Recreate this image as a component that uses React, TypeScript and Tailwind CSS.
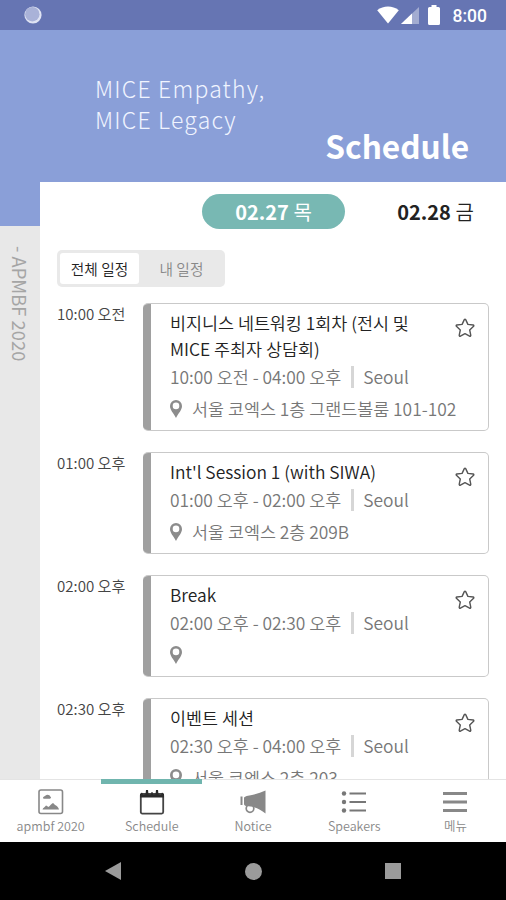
import { useState } from "react"
import clsx from "clsx"

const days = [
  { id: "27", label: "02.27", weekday: "목" },
  { id: "28", label: "02.28", weekday: "금" },
]

const filters = [
  { id: "all", label: "전체 일정" },
  { id: "mine", label: "내 일정" },
]

type Session = {
  id: number
  start: string
  end: string
  title: string
  city: string
  place: string
}

const sessions: Session[] = [
  { id: 1, start: "10:00 오전", end: "04:00 오후", title: "비지니스 네트워킹 1회차 (전시 및 MICE 주최자 상담회)", city: "Seoul", place: "서울 코엑스 1층 그랜드볼룸 101-102" },
  { id: 2, start: "01:00 오후", end: "02:00 오후", title: "Int'l Session 1 (with SIWA)", city: "Seoul", place: "서울 코엑스 2층 209B" },
  { id: 3, start: "02:00 오후", end: "02:30 오후", title: "Break", city: "Seoul", place: "" },
  { id: 4, start: "02:30 오후", end: "04:00 오후", title: "이벤트 세션", city: "Seoul", place: "서울 코엑스 2층 203" },
]

function StatusBar() {
  return (
    <div className="flex h-[30px] shrink-0 items-center bg-[#6675b3] pl-6 pr-[19px] text-white">
      <svg viewBox="0 0 18 18" className="size-[18px]">
        <circle cx="9" cy="9" r="8.6" fill="#dfe3f3" />
        <circle cx="8.3" cy="8.2" r="7.2" fill="#a9b2d8" />
      </svg>
      <svg viewBox="0 0 22 18" className="ml-auto h-[18px] w-[22px]" fill="white">
        <path d="M0.2 4.2C6.5 -0.7 15.5 -0.7 21.8 4.2L11 17.6z" />
      </svg>
      <svg viewBox="0 0 18 18" className="ml-0.5 mt-0.5 size-[18px]">
        <path d="M18 0V17H0z" fill="#a3acd1" />
        <path d="M11 6.6V17H0z" fill="white" />
      </svg>
      <svg viewBox="0 0 12 20" className="ml-[9px] h-5 w-3" fill="white">
        <path d="M3.5 0h5v2h2a1.5 1.5 0 0 1 1.5 1.5v15a1.5 1.5 0 0 1-1.5 1.5h-9A1.5 1.5 0 0 1 0 18.5v-15A1.5 1.5 0 0 1 1.5 2h2z" />
      </svg>
      <span className="ml-[13px] mt-0.5 font-[Roboto] text-[17.5px] font-medium leading-5">8:00</span>
    </div>
  )
}

function Star() {
  return (
    <svg viewBox="0 0 20 20" className="size-5" fill="none" stroke="#555" strokeWidth="1.4" strokeLinejoin="round">
      <path d="M9.3 1.6q.7-1 1.4 0l2.2 4.8 5.2.6q1.2.3.5 1.3l-3.9 3.7 1.1 5.3q0 1.2-1.2.9L10 15.7l-4.6 2.5q-1.2.3-1.2-.9l1.1-5.3-3.9-3.7q-.7-1 .5-1.3l5.2-.6z" />
    </svg>
  )
}

function Pin() {
  return (
    <svg viewBox="0 0 12 18" className="h-[18px] w-3" fill="#8c8c8c">
      <path fillRule="evenodd" d="M6 0a6 6 0 0 1 6 6c0 4-3.5 7-6 12C3.5 13 0 10 0 6a6 6 0 0 1 6-6zm0 2.6a3.3 3.3 0 1 0 0 6.6 3.3 3.3 0 0 0 0-6.6z" />
    </svg>
  )
}

function SessionRow({ session }: { session: Session }) {
  return (
    <div className="flex items-start">
      <div className="w-[86px] shrink-0 whitespace-nowrap text-[15.1px] leading-5 text-[#444]">{session.start}</div>
      <div className="flex flex-1 overflow-hidden rounded-[5px] border-y border-r border-[#c9c9c9]">
        <div className="-my-0.5 w-2 shrink-0 bg-[#a0a0a0]" />
        <div className="flex-1 pb-[3px] pl-[19px] pt-1.5">
          <div className="flex items-start justify-between pb-px">
            <div className="w-[250px] text-[17.4px] leading-[26px] text-[#222]">{session.title}</div>
            <button className="-mb-3 mr-[13px] mt-2">
              <Star />
            </button>
          </div>
          <div className="flex h-7 items-center whitespace-nowrap text-[17.4px] text-[#777]">
            <span>{session.start} - {session.end}</span>
            <span className="ml-2.5 mr-[9px] h-[22px] w-[3px] bg-[#d6d6d6]" />
            <span>{session.city}</span>
          </div>
          <div className="flex h-9 items-center gap-2.5 whitespace-nowrap text-[17.4px] text-[#777]">
            <Pin />
            <span>{session.place}</span>
          </div>
        </div>
      </div>
    </div>
  )
}

function PictureIcon() {
  return (
    <svg viewBox="0 0 26 26" className="size-[26px]" fill="#888">
      <rect x="1" y="1" width="23.5" height="23.5" rx="2" fill="none" stroke="#888" strokeWidth="1.6" />
      <path d="M5 8.8c0-1.5 2-1.3 2.6-2.3C8.8 5 12 5.7 12.2 7.6c1.3.3 1 2-.3 2.2H6.5C5.5 10 5 9.7 5 8.8z" />
      <path d="M4.5 20.5c.5-2 2.5-2.3 3.5-4 1 .2 1.500 1 2.5 1.5 1.5-1 3-3.5 4.500-4 1.5 1 1.5 2 3 2.5 1.5.7 2.5 2.5 3 4z" />
    </svg>
  )
}

function CalendarIcon() {
  return (
    <svg viewBox="0 0 26 26" className="size-[26px]">
      <rect x="1.8" y="5" width="22.4" height="19.6" rx="1.5" fill="none" stroke="#444" strokeWidth="1.8" />
      <path d="M1 8.500V5l2-1.5L4 6l2.500-.5L7 1h2l.5 4.500h2.500L12.500 3h1l.5 2.500h2.500L17 1h2l.5 4.500L22 6l1-2.500L25 5v3.500z" fill="#2b2b2b" />
    </svg>
  )
}

function MegaphoneIcon() {
  return (
    <svg viewBox="0 0 26 26" className="size-[26px]" fill="#888">
      <path d="M0.5 7.500h2v8.500h-2zM4 8.500c1-1 2-1.500 4-1.800C14 6 20 4 25.500 1.500v23C21 21 16 18.500 11 17.500l-5-.5c-1-.3-2-1-2-2z" />
      <circle cx="10" cy="19.500" r="3.800" fill="white" stroke="#888" strokeWidth="1.700" />
      <path d="M6 12h9v6l-9-1z" />
    </svg>
  )
}

function ListIcon() {
  return (
    <svg viewBox="0 0 26 26" className="size-[26px]" fill="#777">
      <circle cx="3" cy="4.5" r="2.2" />
      <circle cx="3" cy="13" r="2.2" />
      <circle cx="3" cy="21.5" r="2.2" />
      <path d="M8.5 3.5H25v2H8.5zM8.5 12H25v2H8.5zM8.5 20.5H25v2H8.5z" />
    </svg>
  )
}

function MenuIcon() {
  return (
    <svg viewBox="0 0 26 26" className="size-[26px]" fill="#888">
      <path d="M1 3h24v3H1zM1 11.5h24v3H1zM1 20h24v3H1z" />
    </svg>
  )
}

const tabs = [
  { id: "home", label: "apmbf 2020", Icon: PictureIcon },
  { id: "schedule", label: "Schedule", Icon: CalendarIcon },
  { id: "notice", label: "Notice", Icon: MegaphoneIcon },
  { id: "speakers", label: "Speakers", Icon: ListIcon },
  { id: "menu", label: "메뉴", Icon: MenuIcon },
]

export default function App() {
  const [day, setDay] = useState("27")
  const [filter, setFilter] = useState("all")
  const [tab, setTab] = useState("schedule")

  return (
    <div className="flex h-[900px] w-[506px] flex-col overflow-hidden bg-white font-['Noto_Sans_CJK_KR',sans-serif] font-[350]">
      <StatusBar />

      {/* Header */}
      <header className="flex h-[152px] shrink-0 flex-col bg-[#8a9fd8] pl-[95px] pr-[37px] pt-[43px] text-white">
        <p className="text-[23px] font-light leading-[31px] tracking-[1.2px] text-[#f0f4ff]">
          MICE Empathy,
          <br />
          MICE Legacy
        </p>
        <h1 className="-mt-2.5 self-end text-[31.6px] font-bold leading-10">Schedule</h1>
      </header>

      <div className="flex min-h-0 flex-1">
        {/* Side rail */}
        <aside className="flex w-10 shrink-0 flex-col bg-[#e8e8e8]">
          <div className="h-11 shrink-0 bg-[#8a9fd8]" />
          <div className="mt-5 self-center whitespace-nowrap text-[18.4px] font-normal leading-6 text-[#a5a5a5] [writing-mode:vertical-rl]">
            - APMBF 2020
          </div>
        </aside>

        <main className="flex min-w-0 flex-1 flex-col overflow-hidden pl-[17px] pr-[17px]">
          <div className="mt-3 flex shrink-0 justify-end">
            {days.map((d) => (
              <button
                key={d.id}
                onClick={() => setDay(d.id)}
                className={clsx(
                  "h-[35px] w-[143px] rounded-full text-[20px] leading-[34px]",
                  day === d.id ? "bg-[#78b8b3] font-normal text-white" : "text-[#222]",
                  d.id === "28" && "ml-[19px] -mr-[18px]"
                )}
              >
                <span className="font-bold">{d.label}</span> {d.weekday}
              </button>
            ))}
          </div>

          {/* Filter */}
          <div className="mt-[21px] flex h-[37px] w-[168px] shrink-0 rounded-[5px] bg-[#e9e9e9] p-[3px] pr-[5px]">
            {filters.map((f) => (
              <button
                key={f.id}
                onClick={() => setFilter(f.id)}
                className={clsx(
                  "rounded-[3px] text-[14.7px] leading-[28px]",
                  f.id === "all" ? "w-[79px]" : "ml-1 flex-1",
                  filter === f.id ? "bg-white text-[#222]" : "text-[#888]"
                )}
              >
                {f.label}
              </button>
            ))}
          </div>

          <div className="mt-4 flex flex-col gap-[21px]">
            {sessions.map((s) => (
              <SessionRow key={s.id} session={s} />
            ))}
          </div>
        </main>
      </div>

      {/* Tab bar */}
      <nav className="flex h-[63px] shrink-0 border-t border-[#e4e4e4] bg-white">
        {tabs.map(({ id, label, Icon }) => (
          <button
            key={id}
            onClick={() => setTab(id)}
            className={clsx(
              "-mt-px flex flex-1 flex-col items-center border-t-[5px] pt-[5px]",
              tab === id ? "border-[#70b5ae]" : "border-transparent"
            )}
          >
            <Icon />
            <span className="mt-px whitespace-nowrap text-[12.5px] leading-5 text-[#888]">{label}</span>
          </button>
        ))}
      </nav>

      {/* System navigation */}
      <div className="flex h-[58px] shrink-0 items-center justify-center gap-[123px] bg-black">
        <svg viewBox="0 0 17 18" className="h-[18px] w-[17px]" fill="#9b9b9b">
          <path d="M16 0v18L0 9z" />
        </svg>
        <div className="size-[17px] rounded-full bg-[#9b9b9b]" />
        <div className="size-4 bg-[#9b9b9b]" />
      </div>
    </div>
  )
}
